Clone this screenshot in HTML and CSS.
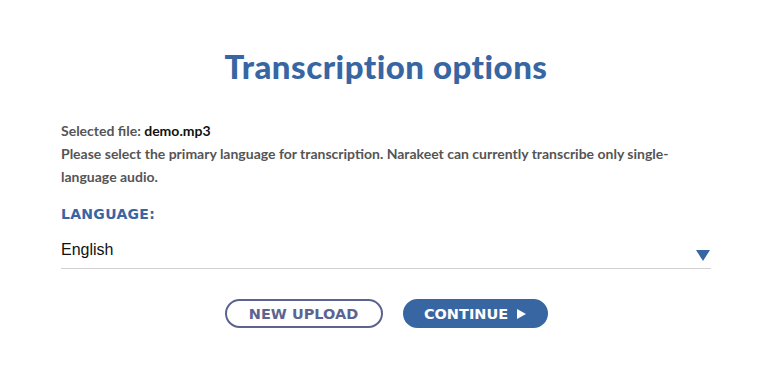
FILE: index.html
```
<!DOCTYPE html>
<html>
<head>
<meta charset="utf-8">
<link rel="stylesheet" href="styles.css">
</head>
<body>
<main class="panel">
  <h1 class="title">Transcription options</h1>
  <p class="info">Selected file: <span class="file">demo.mp3</span><br>Please select the primary language for transcription. Narakeet can currently transcribe only single-language audio.</p>
  <label class="label">LANGUAGE:</label>
  <div class="select">
    <span class="value">English</span>
    <span class="caret"></span>
  </div>
  <div class="actions">
    <button class="btn btn-outline">NEW UPLOAD</button>
    <button class="btn btn-primary">CONTINUE <span class="play"></span></button>
  </div>
</main>
</body>
</html>
```
FILE: styles.css
```
html, body { margin: 0; padding: 0; background: #fff; }
.panel {
  width: 650px;
  margin: 0 auto;
  padding-top: 44px;
  display: flex;
  flex-direction: column;
}
.title {
  margin: 0;
  text-align: center;
  font-family: "Lato", sans-serif;
  font-weight: 900;
  font-size: 33px;
  line-height: 44px;
  color: #3866a3;
  letter-spacing: 0.5px;
}
.info {
  margin: 31px 0 0;
  font-family: "Lato", sans-serif;
  font-weight: 700;
  font-size: 14px;
  line-height: 23px;
  color: #555;
}
.file { color: #111; }
.label {
  margin-top: 17px;
  font-family: "DejaVu Sans", sans-serif;
  font-weight: 700;
  font-size: 14px;
  line-height: 18px;
  color: #3866a3;
  letter-spacing: 0.3px;
}
.select {
  margin-top: 17px;
  display: flex;
  align-items: center;
  justify-content: space-between;
  height: 28px;
  border-bottom: 1px solid #d4d0d0;
}
.value {
  font-family: "Liberation Sans", Arial, sans-serif;
  font-size: 16px;
  color: #111;
  margin-bottom: 8px;
}
.caret {
  width: 0; height: 0;
  border-left: 7px solid transparent;
  border-right: 7px solid transparent;
  border-top: 11px solid #3866a3;
  margin-right: 1px;
  margin-top: 3px;
}
.actions {
  display: flex;
  justify-content: center;
  gap: 20px;
  margin-top: 30px;
}
.btn {
  height: 29px;
  border-radius: 15px;
  font-family: "DejaVu Sans", sans-serif;
  font-weight: 700;
  font-size: 14.5px;
  letter-spacing: 0;
  padding: 0;
  display: flex;
  align-items: center;
  justify-content: center;
  cursor: pointer;
}
.btn-outline {
  width: 158px;
  background: #fff;
  border: 2px solid #5d6391;
  color: #5d6391;
}
.btn-primary {
  width: 145px;
  background: #3866a3;
  border: 2px solid #3866a3;
  color: #fff;
  gap: 9px;
}
.play {
  width: 0; height: 0;
  border-top: 5px solid transparent;
  border-bottom: 5px solid transparent;
  border-left: 9px solid #fff;
}
```
